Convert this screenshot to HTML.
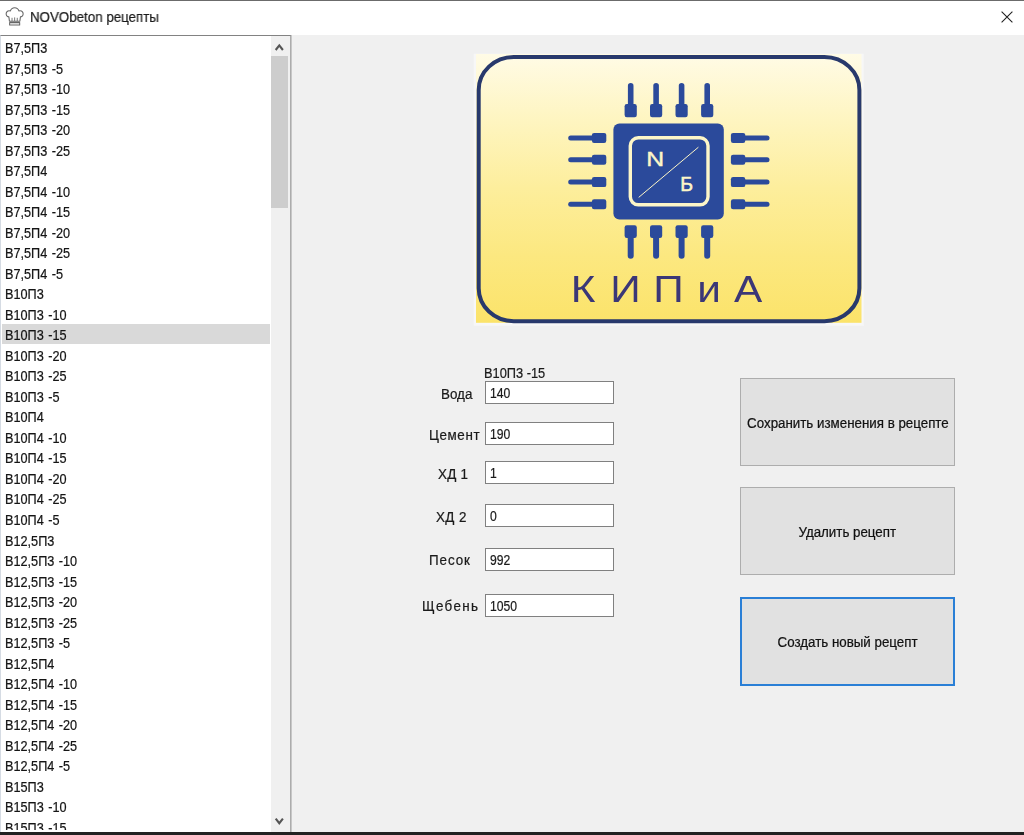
<!DOCTYPE html>
<html lang="ru"><head><meta charset="utf-8"><title>NOVObeton рецепты</title>
<style>
html,body{margin:0;padding:0}
body{width:1024px;height:835px;position:relative;overflow:hidden;background:#f0f0f0;font-family:"Liberation Sans",sans-serif;color:#111;}
.abs{position:absolute}
#title,#list,.lbl,.inp,.btn{will-change:transform;-webkit-text-stroke:0.22px currentColor}
#title,#clip,.lbl,.inp,.btn,svg{filter:blur(0.45px)}
#topline{left:0;top:0;width:1024px;height:1px;background:#6b6b6b}
#titlebar{left:0;top:1px;width:1024px;height:34px;background:#fff}
#title{left:29.6px;top:8.4px;font-size:14px;line-height:18px;color:#1a1a1a;white-space:nowrap;transform:scaleX(0.952);transform-origin:0 50%}
#list{left:0;top:35px;width:291px;height:797px;background:#fff;box-sizing:border-box;border-top:1px solid #828282;border-left:1px solid #d5dbe3;overflow:hidden}
#clip{position:absolute;left:0;top:0;width:269.3px;height:794.4px;overflow:hidden}
#clip div{position:absolute;left:0.5px;width:268.5px;height:20px;line-height:20px;font-size:14px;padding-left:3.3px;box-sizing:border-box;white-space:nowrap;color:#151515;word-spacing:1px}
#list span{display:inline-block;transform:translateY(1px) scaleX(0.906);transform-origin:0 50%}
#clip div.sel{background:#d9d9d9}
#sb{left:271px;top:36px;width:19.6px;height:796px;background:#f0f0f0}
#thumb{left:271px;top:56px;width:17px;height:151.6px;background:#cdcdcd}
#bottom{left:0;top:832px;width:1024px;height:4px;background:#222}
.lbl{font-size:14px;line-height:16px;white-space:nowrap;color:#1a1a1a}
.lbl b{font-weight:normal;display:inline-block;transform:scaleX(0.957);transform-origin:0 50%}
.inp{left:485px;width:129.1px;height:23.3px;box-sizing:border-box;border:1px solid #808080;background:#fff;font-size:14.5px;line-height:23.2px;padding-left:3.8px;color:#1a1a1a;overflow:hidden}
.inp span{display:inline-block;transform:scaleX(0.84);transform-origin:0 50%}
.btn{left:740px;width:215px;box-sizing:border-box;border:1px solid #adadad;background:#e1e1e1;font-size:14px;text-align:center;white-space:nowrap;color:#111}
.btn span{display:inline-block;transform:scaleX(0.952)}
</style></head><body>
<div class="abs" id="titlebar"></div>
<div class="abs" id="topline"></div>
<svg class="abs" style="left:5.1px;top:6.05px" width="19.3" height="21" viewBox="0 0 20 21" preserveAspectRatio="none" fill="none" stroke="#666" stroke-width="1.1" stroke-linejoin="round" stroke-linecap="round">
<path d="M4.6 15.2 L4 10.9 C1.6 10.6 0.9 8.6 1.3 7 C1.8 5.1 3.8 4.3 5.6 4.9 C6.3 2.7 8.2 1.7 10 1.7 C11.8 1.7 13.7 2.7 14.4 4.9 C16.2 4.3 18.2 5.1 18.7 7 C19.1 8.6 18.4 10.6 16 10.9 L15.4 15.2 Z"/>
<path d="M4.8 16.6 H15.2 V19 H4.8 Z"/>
<path d="M7.3 12.2 V14.6 M10 11.8 V14.6 M12.7 12.2 V14.6" stroke-width="0.9"/>
</svg>
<div class="abs" id="title">NOVObeton рецепты</div>
<svg class="abs" style="left:1001.4px;top:10.6px" width="14" height="14" viewBox="0 0 14 14"><path d="M0.6 0.6 L11.4 11.4 M11.4 0.6 L0.6 11.4" stroke="#222" stroke-width="1.1" fill="none"/></svg>

<div class="abs" id="list"><div id="clip">
<div style="top:1.26px"><span>В7,5П3</span></div>
<div style="top:21.77px"><span>В7,5П3 -5</span></div>
<div style="top:42.28px"><span>В7,5П3 -10</span></div>
<div style="top:62.79px"><span>В7,5П3 -15</span></div>
<div style="top:83.30px"><span>В7,5П3 -20</span></div>
<div style="top:103.81px"><span>В7,5П3 -25</span></div>
<div style="top:124.32px"><span>В7,5П4</span></div>
<div style="top:144.83px"><span>В7,5П4 -10</span></div>
<div style="top:165.34px"><span>В7,5П4 -15</span></div>
<div style="top:185.85px"><span>В7,5П4 -20</span></div>
<div style="top:206.36px"><span>В7,5П4 -25</span></div>
<div style="top:226.87px"><span>В7,5П4 -5</span></div>
<div style="top:247.38px"><span>В10П3</span></div>
<div style="top:267.89px"><span>В10П3 -10</span></div>
<div class="sel" style="top:288.40px"><span>В10П3 -15</span></div>
<div style="top:308.91px"><span>В10П3 -20</span></div>
<div style="top:329.42px"><span>В10П3 -25</span></div>
<div style="top:349.93px"><span>В10П3 -5</span></div>
<div style="top:370.44px"><span>В10П4</span></div>
<div style="top:390.95px"><span>В10П4 -10</span></div>
<div style="top:411.46px"><span>В10П4 -15</span></div>
<div style="top:431.97px"><span>В10П4 -20</span></div>
<div style="top:452.48px"><span>В10П4 -25</span></div>
<div style="top:472.99px"><span>В10П4 -5</span></div>
<div style="top:493.50px"><span>В12,5П3</span></div>
<div style="top:514.01px"><span>В12,5П3 -10</span></div>
<div style="top:534.52px"><span>В12,5П3 -15</span></div>
<div style="top:555.03px"><span>В12,5П3 -20</span></div>
<div style="top:575.54px"><span>В12,5П3 -25</span></div>
<div style="top:596.05px"><span>В12,5П3 -5</span></div>
<div style="top:616.56px"><span>В12,5П4</span></div>
<div style="top:637.07px"><span>В12,5П4 -10</span></div>
<div style="top:657.58px"><span>В12,5П4 -15</span></div>
<div style="top:678.09px"><span>В12,5П4 -20</span></div>
<div style="top:698.60px"><span>В12,5П4 -25</span></div>
<div style="top:719.11px"><span>В12,5П4 -5</span></div>
<div style="top:739.62px"><span>В15П3</span></div>
<div style="top:760.13px"><span>В15П3 -10</span></div>
<div style="top:780.64px"><span>В15П3 -15</span></div>
</div></div>
<div class="abs" id="sb"></div>
<div class="abs" id="thumb"></div>
<svg class="abs" style="left:288px;top:35px" width="6" height="797" viewBox="0 0 6 797"><rect x="2.25" y="0" width="1.2" height="797" fill="#959595"/></svg>
<svg class="abs" style="left:271px;top:36px" width="19" height="20" viewBox="0 0 19 20"><path d="M4.7 14 L8.3 9.4 L11.9 14" stroke="#555" stroke-width="2.1" fill="none"/></svg>
<svg class="abs" style="left:271px;top:811px" width="19" height="20" viewBox="0 0 19 20"><path d="M4.7 7.6 L8.3 12.2 L11.9 7.6" stroke="#555" stroke-width="2.1" fill="none"/></svg>

<svg class="abs" style="left:0;top:0" width="1024" height="340" viewBox="0 0 1024 340">
<defs><linearGradient id="g" x1="0" y1="0" x2="0" y2="1">
<stop offset="0" stop-color="#fffbe6"/><stop offset="0.25" stop-color="#fef5c0"/><stop offset="0.5" stop-color="#fdee9c"/><stop offset="0.75" stop-color="#fce880"/><stop offset="1" stop-color="#fbe36a"/></linearGradient></defs>
<rect x="473.8" y="53.8" width="390" height="272" fill="#f7f7f7"/>
<rect x="476" y="54" width="385.5" height="268.8" fill="url(#g)"/>
<rect x="478.7" y="57" width="380.7" height="264.2" rx="35" ry="33" fill="none" stroke="#28396c" stroke-width="4"/>
<g fill="#2b4a9b">
<rect x="613.4" y="123.5" width="110.4" height="96" rx="6"/>
<rect x="624.6" y="104" width="12.2" height="13.2" rx="2.2"/>
<rect x="627.9" y="83" width="5.6" height="24" rx="2.8"/>
<rect x="624.6" y="225.3" width="12.2" height="12.6" rx="2.2"/>
<rect x="627.7" y="234" width="6" height="24.8" rx="3"/>
<rect x="650.0" y="104" width="12.2" height="13.2" rx="2.2"/>
<rect x="653.3" y="83" width="5.6" height="24" rx="2.8"/>
<rect x="650.0" y="225.3" width="12.2" height="12.6" rx="2.2"/>
<rect x="653.1" y="234" width="6" height="24.8" rx="3"/>
<rect x="675.5" y="104" width="12.2" height="13.2" rx="2.2"/>
<rect x="678.8" y="83" width="5.6" height="24" rx="2.8"/>
<rect x="675.5" y="225.3" width="12.2" height="12.6" rx="2.2"/>
<rect x="678.6" y="234" width="6" height="24.8" rx="3"/>
<rect x="701.1" y="104" width="12.2" height="13.2" rx="2.2"/>
<rect x="704.4" y="83" width="5.6" height="24" rx="2.8"/>
<rect x="701.1" y="225.3" width="12.2" height="12.6" rx="2.2"/>
<rect x="704.2" y="234" width="6" height="24.8" rx="3"/>
<rect x="591.9" y="132.9" width="14.4" height="10" rx="2.2"/>
<rect x="568.2" y="135.4" width="27" height="5" rx="2.5"/>
<rect x="730.9" y="132.9" width="14.4" height="10" rx="2.2"/>
<rect x="742" y="135.4" width="27.5" height="5" rx="2.5"/>
<rect x="591.9" y="154.7" width="14.4" height="10" rx="2.2"/>
<rect x="568.2" y="157.2" width="27" height="5" rx="2.5"/>
<rect x="730.9" y="154.7" width="14.4" height="10" rx="2.2"/>
<rect x="742" y="157.2" width="27.5" height="5" rx="2.5"/>
<rect x="591.9" y="177.1" width="14.4" height="10" rx="2.2"/>
<rect x="568.2" y="179.6" width="27" height="5" rx="2.5"/>
<rect x="730.9" y="177.1" width="14.4" height="10" rx="2.2"/>
<rect x="742" y="179.6" width="27.5" height="5" rx="2.5"/>
<rect x="591.9" y="199.3" width="14.4" height="10" rx="2.2"/>
<rect x="568.2" y="201.8" width="27" height="5" rx="2.5"/>
<rect x="730.9" y="199.3" width="14.4" height="10" rx="2.2"/>
<rect x="742" y="201.8" width="27.5" height="5" rx="2.5"/>
</g>
<rect x="630.3" y="137.8" width="77.7" height="67" rx="8" fill="none" stroke="#fdf6c8" stroke-width="3.4"/>
<path d="M638.7 197.4 L698.4 147.2" stroke="#fdf6c8" stroke-width="1"/>
<text transform="translate(655.3 166) scale(1.27 1)" x="0" y="0" font-family="Liberation Sans, sans-serif" font-size="19.5" stroke="#fdf6c8" stroke-width="0.4" fill="#fdf6c8" text-anchor="middle">N</text>
<text x="686.6" y="191.4" font-family="Liberation Sans, sans-serif" font-size="19.5" stroke="#fdf6c8" stroke-width="0.5" fill="#fdf6c8" text-anchor="middle">Б</text>
<g transform="scale(1.13 1)"><text y="302.4" font-family="Liberation Sans, sans-serif" font-size="37.5" fill="#3b3777" x="505 540 578 617 649.5">КИПиА</text></g>
</svg>

<div class="abs lbl" style="left:483.7px;top:365.3px;font-size:14px"><span style="display:inline-block;transform:scaleX(0.915);transform-origin:0 50%">В10П3 -15</span></div>
<div class="abs lbl" id="l1" style="left:440.9px;top:386px"><b>Вода</b></div>
<div class="abs lbl" id="l2" style="left:429.2px;top:427px;letter-spacing:0.62px"><b>Цемент</b></div>
<div class="abs lbl" id="l3" style="left:437.5px;top:466px;letter-spacing:0.3px"><b>ХД 1</b></div>
<div class="abs lbl" id="l4" style="left:435.6px;top:509px;letter-spacing:0.4px"><b>ХД 2</b></div>
<div class="abs lbl" id="l5" style="left:429.3px;top:552px;letter-spacing:0.95px"><b>Песок</b></div>
<div class="abs lbl" id="l6" style="left:421.8px;top:598.4px;letter-spacing:1.42px"><b>Щебень</b></div>

<div class="abs inp" style="top:381.4px"><span>140</span></div>
<div class="abs inp" style="top:422.4px"><span>190</span></div>
<div class="abs inp" style="top:461.4px"><span>1</span></div>
<div class="abs inp" style="top:504.2px"><span>0</span></div>
<div class="abs inp" style="top:547.9px"><span>992</span></div>
<div class="abs inp" style="top:593.6px"><span>1050</span></div>

<div class="abs btn" style="top:378px;height:88px;line-height:88.6px"><span>Сохранить изменения в рецепте</span></div>
<div class="abs btn" style="top:487.3px;height:88px;line-height:88.6px"><span>Удалить рецепт</span></div>
<div class="abs btn" style="top:596.5px;height:89px;line-height:87px;border:2px solid #2a7fd6"><span>Создать новый рецепт</span></div>

<div class="abs" id="bottom"></div>
</body></html>
